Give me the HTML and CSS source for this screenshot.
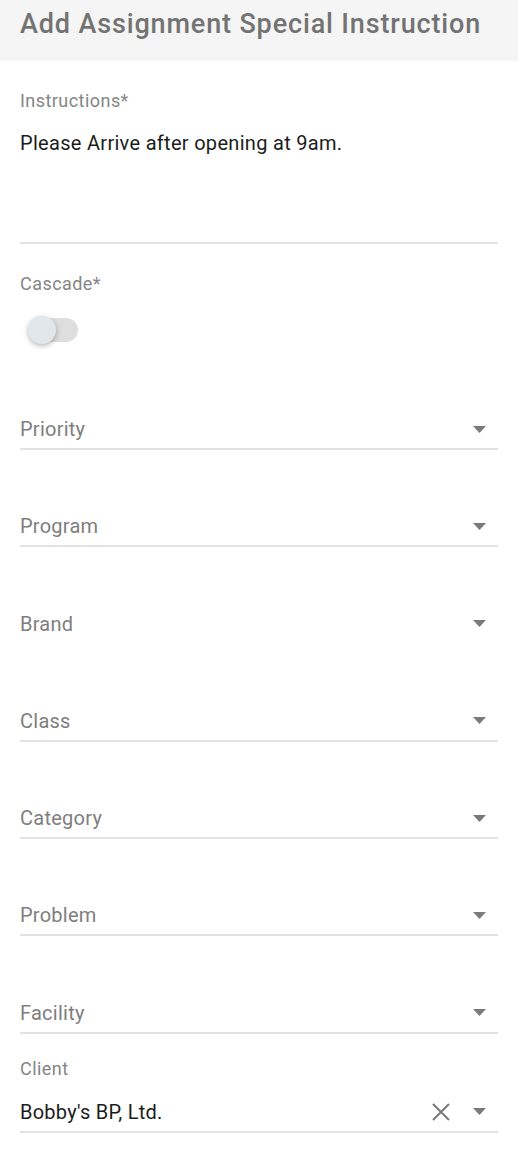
FILE: index.html
```html
<!DOCTYPE html>
<html lang="en">
<head>
  <meta charset="UTF-8">
  <title>Add Assignment Special Instruction</title>
  <link rel="stylesheet" href="styles.css">
</head>
<body>
  <!-- Title bar -->
  <div class="title-bar">
    <h1>Add Assignment Special Instruction</h1>
  </div>

  <form class="form">
    <!-- Instructions -->
    <div class="field">
      <label class="label">Instructions*</label>
      <div class="textarea">Please Arrive after opening at 9am.</div>
    </div>

    <!-- Cascade switch -->
    <div class="field">
      <label class="label">Cascade*</label>
      <span class="switch">
        <span class="track"></span>
        <span class="thumb"></span>
      </span>
    </div>

    <div class="select first">
      <span class="placeholder">Priority</span>
      <svg class="arrow" width="13" height="7" viewBox="0 0 13 7"><polygon points="0,0 13,0 6.5,7" /></svg>
    </div>
    <div class="select">
      <span class="placeholder">Program</span>
      <svg class="arrow" width="13" height="7" viewBox="0 0 13 7"><polygon points="0,0 13,0 6.5,7" /></svg>
    </div>
    <div class="select no-line">
      <span class="placeholder">Brand</span>
      <svg class="arrow" width="13" height="7" viewBox="0 0 13 7"><polygon points="0,0 13,0 6.5,7" /></svg>
    </div>
    <div class="select">
      <span class="placeholder">Class</span>
      <svg class="arrow" width="13" height="7" viewBox="0 0 13 7"><polygon points="0,0 13,0 6.5,7" /></svg>
    </div>
    <div class="select">
      <span class="placeholder">Category</span>
      <svg class="arrow" width="13" height="7" viewBox="0 0 13 7"><polygon points="0,0 13,0 6.5,7" /></svg>
    </div>
    <div class="select">
      <span class="placeholder">Problem</span>
      <svg class="arrow" width="13" height="7" viewBox="0 0 13 7"><polygon points="0,0 13,0 6.5,7" /></svg>
    </div>
    <div class="select">
      <span class="placeholder">Facility</span>
      <svg class="arrow" width="13" height="7" viewBox="0 0 13 7"><polygon points="0,0 13,0 6.5,7" /></svg>
    </div>

    <!-- Client (filled) -->
    <div class="field client">
      <label class="label">Client</label>
      <div class="select filled">
        <span class="value">Bobby's BP, Ltd.</span>
        <svg class="clear" width="18" height="18" viewBox="0 0 18 18"><path d="M1 1L17 17M17 1L1 17" /></svg>
        <svg class="arrow" width="13" height="7" viewBox="0 0 13 7"><polygon points="0,0 13,0 6.5,7" /></svg>
      </div>
    </div>
  </form>
</body>
</html>
```

FILE: styles.css
```css
body {
  margin: 0;
  padding: 0;
  font-family: Roboto, 'Liberation Sans', sans-serif;
  background: #fff;
  color: #212121;
}

/* Title bar */
.title-bar {
  height: 61px;
  box-sizing: border-box;
  padding: 9px 20px 0;
  background: #f5f5f5;
}

.title-bar h1 {
  margin: 0;
  font-size: 27px;
  line-height: 30px;
  font-weight: 500;
  letter-spacing: 0.85px;
  color: #737373;
  white-space: nowrap;
}

/* Form */
.form {
  padding: 0 20px;
}

.field {
  display: flex;
  flex-direction: column;
  align-items: flex-start;
}

.label {
  margin-top: 30px;
  font-size: 18px;
  line-height: 20px;
  letter-spacing: 0.45px;
  color: #858585;
}

.textarea {
  align-self: stretch;
  margin-top: 20px;
  height: 111px;
  font-size: 20px;
  line-height: 24px;
  letter-spacing: 0.3px;
  color: #1c1c1c;
  border-bottom: 2px solid #e2e2e2;
}

/* Switch */
.switch {
  position: relative;
  margin: 22px 0 0 8px;
  width: 50px;
  height: 28px;
}

.switch .track {
  position: absolute;
  left: 2px;
  right: 0;
  top: 2px;
  height: 24px;
  border-radius: 12px;
  background: #dedede;
}

.switch .thumb {
  position: absolute;
  left: 0;
  top: 0;
  width: 28px;
  height: 28px;
  border-radius: 50%;
  background: #e2e7ec;
  box-shadow: 0 2px 4px rgba(0, 0, 0, 0.22), 0 1px 8px rgba(0, 0, 0, 0.08);
}

/* Selects */
.select {
  display: flex;
  align-items: center;
  margin-top: 64.3px;
  padding-bottom: 7px;
  font-size: 20px;
  line-height: 24px;
  letter-spacing: 0.25px;
  border-bottom: 2px solid #e2e2e2;
}

.select.first {
  margin-top: 73px;
}

.select.no-line {
  border-bottom-color: transparent;
}

.placeholder {
  flex: 1;
  color: #7e7e7e;
}

.arrow {
  margin-right: 12px;
  fill: #7a7a7a;
}

/* Client */
.client .label {
  margin-top: 25px;
}

.client .select {
  align-self: stretch;
  margin-top: 21px;
}

.value {
  flex: 1;
  color: #1c1c1c;
}

.clear {
  margin-right: 23px;
  fill: none;
  stroke: #7a7a7a;
  stroke-width: 2;
}
```
